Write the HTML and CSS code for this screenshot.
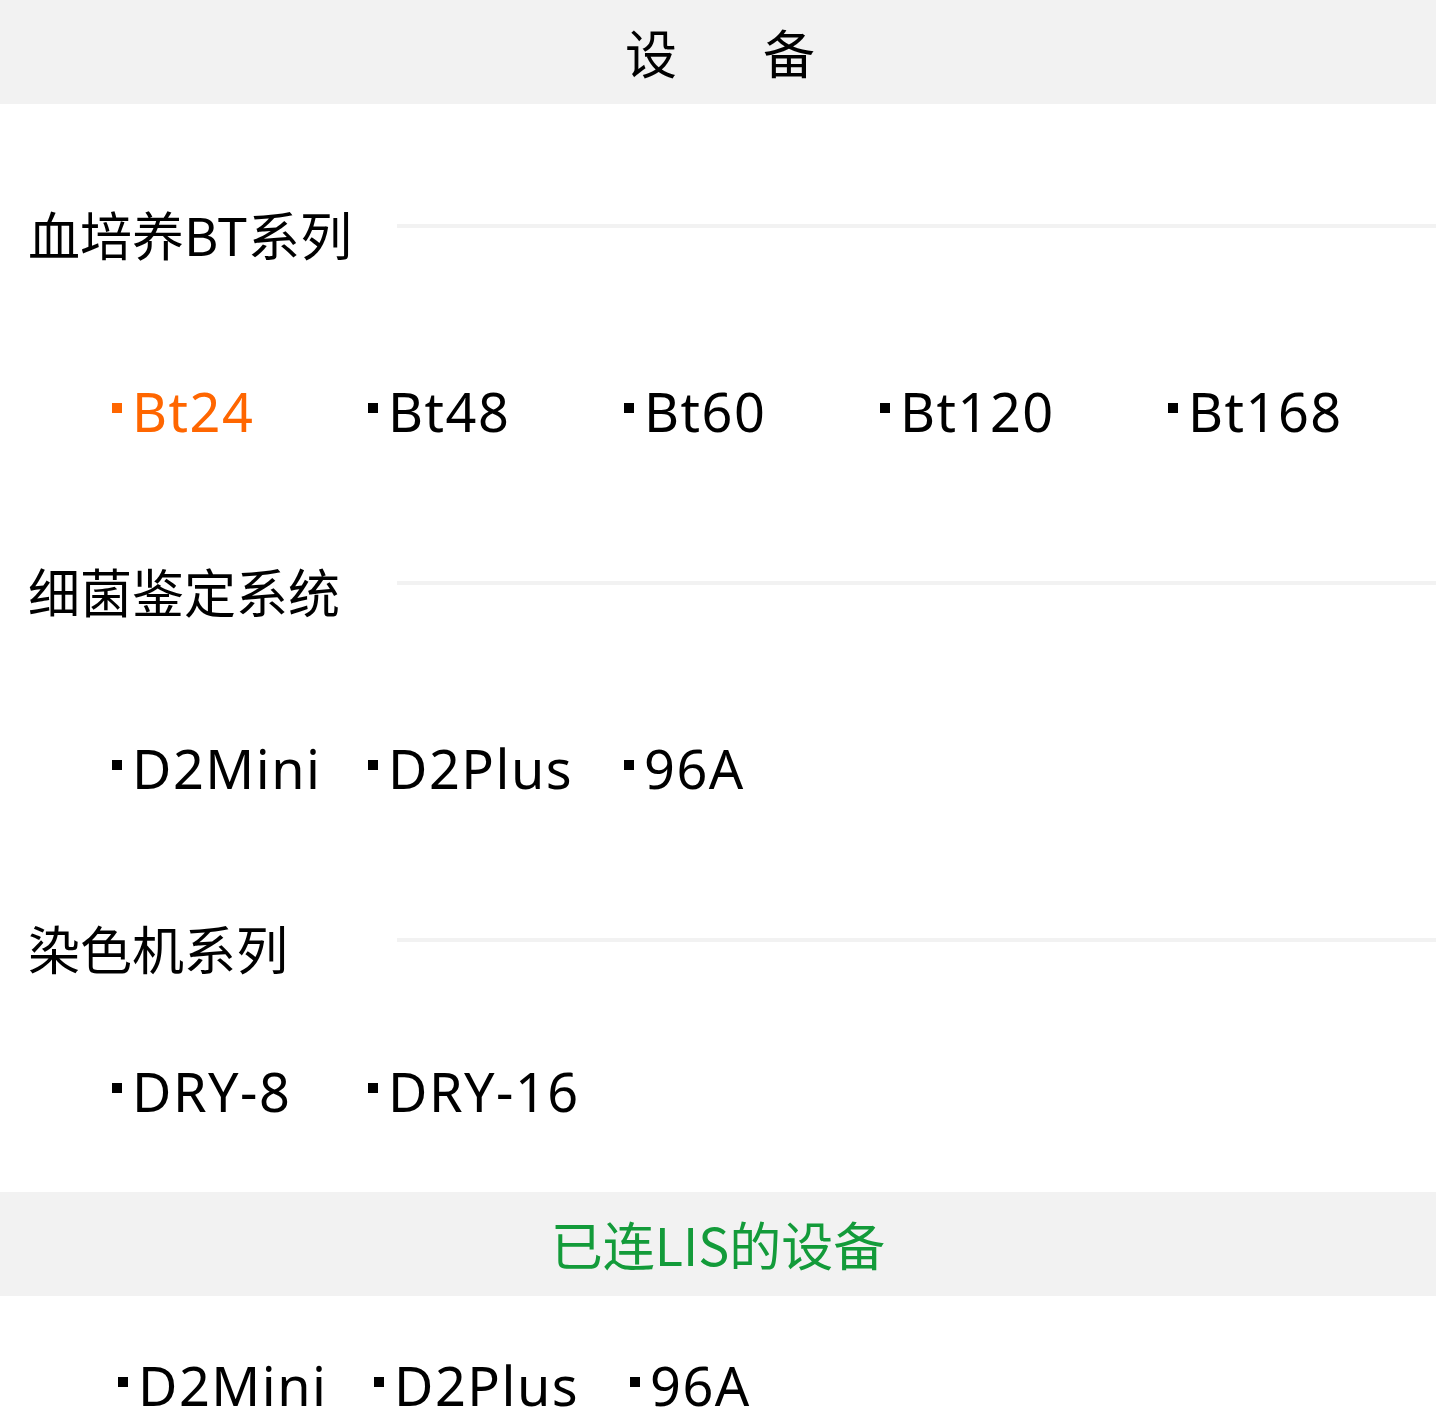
FILE: index.html
```html
<!DOCTYPE html>
<html lang="zh-CN">
<head>
<meta charset="utf-8">
<title>设备</title>
<link rel="stylesheet" href="styles.css">
</head>
<body>
<div class="page">
  <header class="bar">
    <span class="bar-char">设</span><span class="bar-char">备</span>
  </header>

  <section class="group group-first">
    <div class="group-title">
      <h2 class="title-text">血培养BT系列</h2>
      <div class="title-line"></div>
    </div>
    <ul class="items">
      <li class="item active"><span class="dot"></span><span class="label">Bt24</span></li>
      <li class="item"><span class="dot"></span><span class="label">Bt48</span></li>
      <li class="item"><span class="dot"></span><span class="label">Bt60</span></li>
      <li class="item wide"><span class="dot"></span><span class="label">Bt120</span></li>
      <li class="item"><span class="dot"></span><span class="label">Bt168</span></li>
    </ul>
  </section>

  <section class="group">
    <div class="group-title">
      <h2 class="title-text">细菌鉴定系统</h2>
      <div class="title-line"></div>
    </div>
    <ul class="items">
      <li class="item"><span class="dot"></span><span class="label">D2Mini</span></li>
      <li class="item"><span class="dot"></span><span class="label">D2Plus</span></li>
      <li class="item"><span class="dot"></span><span class="label">96A</span></li>
    </ul>
  </section>

  <section class="group">
    <div class="group-title">
      <h2 class="title-text">染色机系列</h2>
      <div class="title-line"></div>
    </div>
    <ul class="items items-tight">
      <li class="item"><span class="dot"></span><span class="label">DRY-8</span></li>
      <li class="item"><span class="dot"></span><span class="label">DRY-16</span></li>
    </ul>
  </section>

  <div class="bar bar-lis">已连LIS的设备</div>

  <ul class="items items-lis">
    <li class="item"><span class="dot"></span><span class="label">D2Mini</span></li>
    <li class="item"><span class="dot"></span><span class="label">D2Plus</span></li>
    <li class="item"><span class="dot"></span><span class="label">96A</span></li>
  </ul>
</div>
</body>
</html>
```

FILE: styles.css
```css
html, body {
  margin: 0;
  padding: 0;
  background: #ffffff;
}

body {
  font-family: "Noto Sans CJK SC", "Noto Sans", sans-serif;
  color: #000000;
  overflow: hidden;
}

.page {
  width: 1436px;
  height: 1407px;
  overflow: hidden;
}

.bar {
  height: 104px;
  background: #f2f2f2;
  display: flex;
  justify-content: center;
  align-items: center;
  font-size: 52px;
  line-height: 104px;
}

.bar-char {
  display: block;
}

.bar-char:first-child {
  margin-left: 4px;
}

.bar-char + .bar-char {
  margin-left: 86px;
}

.group {
  padding-top: 100px;
}

.group-first {
  padding-top: 90px;
}

.group-title {
  display: flex;
  align-items: center;
  height: 80px;
}

.title-text {
  margin: 0;
  width: 397px;
  padding-left: 28px;
  box-sizing: border-box;
  font-size: 52px;
  font-weight: normal;
  line-height: 80px;
  white-space: nowrap;
}

.title-line {
  flex: 1;
  height: 4px;
  background: #f2f2f2;
  margin-bottom: 16px;
}

.items {
  list-style: none;
  margin: 97px 0 0 0;
  padding: 0 0 0 112px;
  display: flex;
  height: 80px;
}

.items-tight {
  margin-top: 63px;
}

.item {
  width: 256px;
  flex: none;
  display: flex;
  align-items: center;
  height: 80px;
  font-family: "Noto Sans", "Noto Sans CJK SC", sans-serif;
  font-size: 54px;
  line-height: 80px;
  letter-spacing: 1.5px;
}

.item.wide {
  width: 288px;
}

.dot {
  display: block;
  width: 10px;
  height: 10px;
  background: currentColor;
  margin-right: 10px;
  margin-bottom: 6px;
  flex: none;
}

.label {
  display: block;
  white-space: nowrap;
}

.item.active {
  color: #ff6600;
}

.bar-lis {
  margin-top: 61px;
  color: #139b3a;
}

.items-lis {
  margin-top: 49px;
  padding-left: 118px;
}
```
